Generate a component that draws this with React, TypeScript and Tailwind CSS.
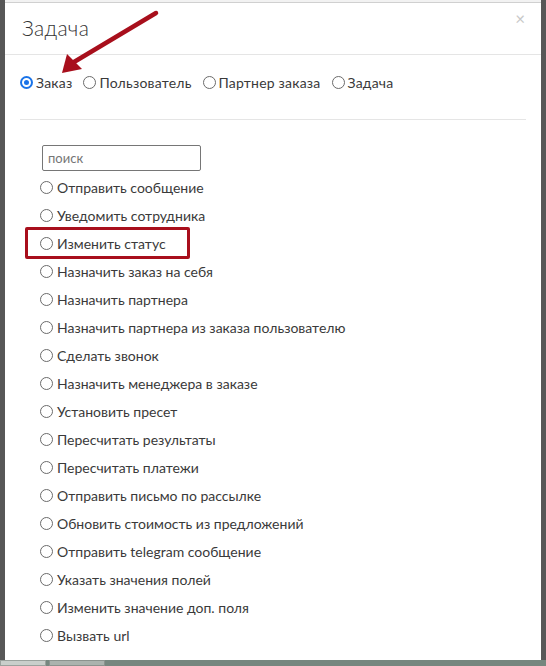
import React from 'react'

const actions = [
  'Отправить сообщение',
  'Уведомить сотрудника',
  'Изменить статус',
  'Назначить заказ на себя',
  'Назначить партнера',
  'Назначить партнера из заказа пользователю',
  'Сделать звонок',
  'Назначить менеджера в заказе',
  'Установить пресет',
  'Пересчитать результаты',
  'Пересчитать платежи',
  'Отправить письмо по рассылке',
  'Обновить стоимость из предложений',
  'Отправить telegram сообщение',
  'Указать значения полей',
  'Изменить значение доп. поля',
  'Вызвать url',
]

const targets = ['Заказ', 'Пользователь', 'Партнер заказа', 'Задача']

function Radio({ checked }: { checked?: boolean }) {
  if (checked) {
    return (
      <span className="w-[13px] h-[13px] rounded-full bg-[#1a73e8] flex items-center justify-center shrink-0">
        <span className="w-[9px] h-[9px] rounded-full border-[2px] border-white bg-[#1a73e8]" />
      </span>
    )
  }
  return <span className="w-[13px] h-[13px] rounded-full border border-[#6b6b6b] bg-white shrink-0" />
}

export default function App() {
  return (
    <div className="w-[546px] h-[666px] bg-[#575757] flex flex-col overflow-hidden font-['Lato','Open_Sans',sans-serif] relative">
      <div className="mx-[5px] w-[536px] h-[660px] bg-white flex flex-col">
        <div className="h-[3px] bg-[#f2f2f2] border-b border-[#d0d0d0]" />
        {/* header */}
        <div className="h-[52px] border-b border-[#e5e5e5] flex items-start justify-between pl-[17px] pr-[16px]">
          <h2 className="text-[21px] font-light text-[#333] mt-[9px] tracking-[0.3px]">Задача</h2>
          <span className="text-[#c8c8c8] text-[17px] leading-none mt-[7px]">×</span>
        </div>

        <div className="px-[15px]">
          <div className="flex items-center h-[56px] pb-[2px] text-[14px] text-[#3a3a3a]">
            {targets.map((t, i) => (
              <label key={t} className="flex items-center gap-[3px] mr-[11px]">
                <Radio checked={i === 0} />
                <span className="tracking-[0.2px]">{t}</span>
              </label>
            ))}
          </div>
          <div className="border-t border-[#e5e5e5] mt-[8px]" />

          <div className="pl-[22px] pt-[25px]">
            <input
              placeholder="поиск"
              className="w-[159px] h-[26px] border border-[#767676] rounded-[2px] px-[5px] text-[13px] text-[#333] placeholder:text-[#757575] outline-none block"
            />
            <div className="flex flex-col pt-[2px] -ml-[2px]">
              {actions.map((a) => (
                <label key={a} className="h-[28px] flex items-center gap-[4px] text-[14px] text-[#3a3a3a]">
                  <Radio />
                  <span>{a}</span>
                </label>
              ))}
            </div>
          </div>
        </div>
      </div>

      {/* bottom taskbar strip */}
      <div className="flex-1 bg-[#76877f] flex gap-[3px]">
        <div className="w-[46px] bg-[#c9cfcb] border border-[#9aa29d]" />
        <div className="w-[56px] bg-[#aab3ae] border border-[#8a938e]" />
      </div>

      {/* highlight box */}
      <div className="absolute left-[25px] top-[227px] w-[165px] h-[32px] border-[3px] border-[#a80f1c] rounded-[2px]" />

      {/* arrow */}
      <svg className="absolute left-0 top-0" width="200" height="90" viewBox="0 0 200 90">
        <line x1="156" y1="13" x2="74" y2="62" stroke="#a80f1c" strokeWidth="4.5" strokeLinecap="round" />
        <polygon points="62,73 67,54 82,69" fill="#a80f1c" />
      </svg>
    </div>
  )
}
